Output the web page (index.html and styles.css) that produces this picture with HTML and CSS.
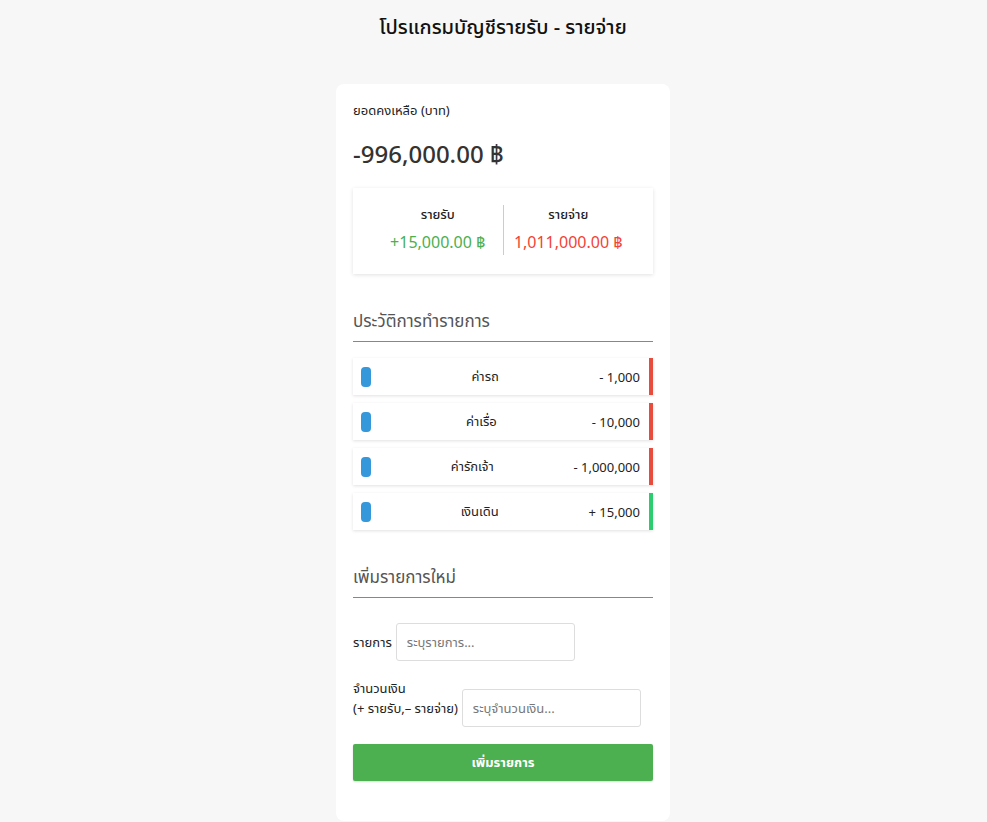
FILE: index.html
```html
<!DOCTYPE html>
<html lang="th">
<head>
<meta charset="utf-8">
<title>โปรแกรมบัญชีรายรับ - รายจ่าย</title>
<link rel="stylesheet" href="styles.css">
</head>
<body>
<h2 class="title">โปรแกรมบัญชีรายรับ - รายจ่าย</h2>
<div class="card">
  <h4 class="balance-label">ยอดคงเหลือ (บาท)</h4>
  <h1 class="balance">-996,000.00 ฿</h1>
  <div class="summary">
    <div class="sum-col">
      <h4>รายรับ</h4>
      <p class="money plus">+15,000.00 ฿</p>
    </div>
    <div class="sum-col">
      <h4>รายจ่าย</h4>
      <p class="money minus">1,011,000.00 ฿</p>
    </div>
  </div>
  <h3 class="section">ประวัติการทำรายการ</h3>
  <ul class="list">
    <li class="item minus"><button class="del"></button><span class="name">ค่ารถ</span><span class="amt">- 1,000</span></li>
    <li class="item minus"><button class="del"></button><span class="name">ค่าเรื่อ</span><span class="amt">- 10,000</span></li>
    <li class="item minus"><button class="del"></button><span class="name">ค่ารักเจ้า</span><span class="amt">- 1,000,000</span></li>
    <li class="item plus"><button class="del"></button><span class="name">เงินเดิน</span><span class="amt">+ 15,000</span></li>
  </ul>
  <h3 class="section section-add">เพิ่มรายการใหม่</h3>
  <form class="form">
    <div class="field">
      <label>รายการ</label>
      <input type="text" placeholder="ระบุรายการ...">
    </div>
    <div class="field">
      <label>จำนวนเงิน<br>(+ รายรับ,– รายจ่าย)</label>
      <input type="text" placeholder="ระบุจำนวนเงิน...">
    </div>
    <button type="button" class="submit">เพิ่มรายการ</button>
  </form>
</div>
</body>
</html>
```

FILE: styles.css
```css
* { box-sizing: border-box; }
body {
  margin: 0;
  padding-left: 19px;
  background: #f7f7f7;
  font-family: "Noto Sans", "Noto Sans Thai", sans-serif;
  color: #222;
  display: flex;
  flex-direction: column;
  align-items: center;
}
.title {
  font-size: 20px;
  font-weight: 500;
  margin: 13px 0 41px;
  color: #111;
}
.card {
  width: 334px;
  background: #fff;
  border-radius: 8px;
  padding: 17px 17px 40px;
}
.balance-label {
  margin: 0;
  font-size: 13px;
  font-weight: 400;
}
.balance {
  margin: 16px 0 14px;
  font-size: 24px;
  font-weight: 500;
  color: #333;
}
.summary {
  display: flex;
  background: #fff;
  box-shadow: 0 1px 4px rgba(0,0,0,0.12);
  padding: 17px 20px 19px;
}
.sum-col {
  flex: 1;
  text-align: center;
}
.sum-col:first-child { border-right: 1px solid #ccc; }
.sum-col h4 {
  margin: 0 0 6px;
  font-size: 13px;
  font-weight: 500;
}
.money {
  margin: 0;
  font-size: 16px;
}
.money.plus { color: #4caf50; }
.money.minus { color: #f44336; }
.section {
  margin: 35px 0 16px;
  padding-bottom: 6px;
  border-bottom: 1px solid #4caf50;
  font-size: 17px;
  font-weight: 400;
  color: #555;
}
.section-add { margin-top: 35px; }
.list {
  list-style: none;
  margin: 0;
  padding: 0;
}
.item {
  display: flex;
  align-items: center;
  justify-content: space-between;
  height: 37px;
  padding: 0 9px 0 8px;
  margin-bottom: 8px;
  background: #fff;
  box-shadow: 0 1px 3px rgba(0,0,0,0.12);
  font-size: 13px;
}
.item.minus { border-right: 4px solid #e74c3c; }
.item.plus { border-right: 4px solid #2ecc71; }
.del {
  width: 10px;
  height: 20px;
  border: 0;
  padding: 0;
  border-radius: 4px;
  background: #3498db;
}
.form { margin-top: 25px; }
.field {
  display: flex;
  align-items: last baseline;
  gap: 4px;
  margin-bottom: 17px;
  font-size: 13px;
}
.field label { line-height: 20px; }
.field input {
  width: 179px;
  height: 38px;
  border: 1px solid #ddd;
  border-radius: 3px;
  padding: 0 10px;
  font-family: inherit;
  font-size: 13px;
}
.field input::placeholder { color: #777; }
.submit {
  width: 100%;
  height: 37px;
  border: 0;
  border-radius: 2px;
  background: #4caf50;
  color: #fff;
  font-family: inherit;
  font-size: 13px;
  font-weight: 700;
  box-shadow: 0 1px 2px rgba(0,0,0,0.15);
}
```
